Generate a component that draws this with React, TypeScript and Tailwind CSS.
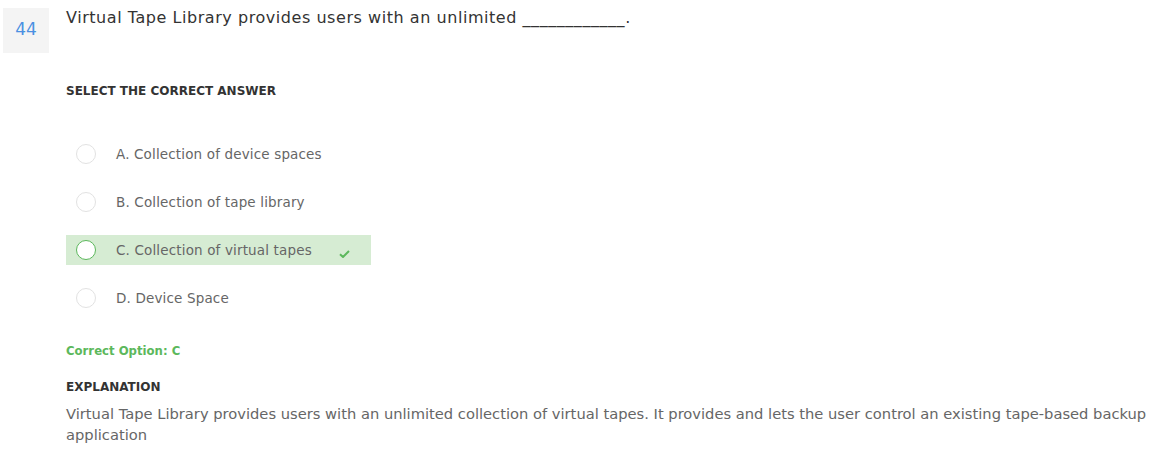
const options = [
  { key: "A", text: "Collection of device spaces" },
  { key: "B", text: "Collection of tape library" },
  { key: "C", text: "Collection of virtual tapes" },
  { key: "D", text: "Device Space" },
];

const correct = "C";

function Option({ label, text, isCorrect }: { label: string; text: string; isCorrect: boolean }) {
  return (
    <div
      className={
        "flex h-[30px] w-[305px] items-center pl-[10px] " +
        (isCorrect ? "bg-[#d6ecd3]" : "")
      }
    >
      <span
        className={
          "h-[20px] w-[20px] shrink-0 rounded-full border bg-white " +
          (isCorrect ? "border-[#5cb85c] bg-transparent" : "border-[#e2e2e2]")
        }
      />
      <span className="ml-[20px] text-[13.5px] tracking-[0.15px] text-[#666]">
        {label}. {text}
      </span>
      {isCorrect && (
        <svg className="ml-[27px] mt-[7px]" width="11" height="8" viewBox="0 0 11 8">
          <path d="M1 4.2 L4 7 L10 1" fill="none" stroke="#5cb85c" strokeWidth="2" />
        </svg>
      )}
    </div>
  );
}

export default function App() {
  return (
    <div className="flex bg-white font-['DejaVu_Sans',sans-serif] text-[#333]" style={{ minHeight: 453 }}>
      <div className="ml-[3px] mt-[8px] flex h-[45px] w-[46px] shrink-0 items-center justify-center bg-[#f4f4f4] pb-[1px] text-[17px] text-[#4a90e2]">
        44
      </div>
      <div className="ml-[17px] flex w-[1088px] flex-col pt-[6px]">
        <p className="text-[16px] leading-6 tracking-[0.55px] text-[#333]">
          Virtual Tape Library provides users with an unlimited ____________.
        </p>
        <h3 className="mt-[51px] text-[12px] font-bold leading-5 text-[#333]">SELECT THE CORRECT ANSWER</h3>
        <div className="mt-[38px] flex flex-col gap-[18px]">
          {options.map((o) => (
            <Option key={o.key} label={o.key} text={o.text} isCorrect={o.key === correct} />
          ))}
        </div>
        <p className="mt-[28px] text-[11.7px] font-bold leading-5 text-[#5cb85c]">Correct Option: {correct}</p>
        <h3 className="mt-[16px] text-[12px] font-bold leading-5 text-[#333]">EXPLANATION</h3>
        <p className="mt-[6px] text-[14.7px] leading-[21px] text-[#666]">
          Virtual Tape Library provides users with an unlimited collection of virtual tapes. It provides and lets the
          user control an existing tape-based backup application
        </p>
      </div>
    </div>
  );
}
